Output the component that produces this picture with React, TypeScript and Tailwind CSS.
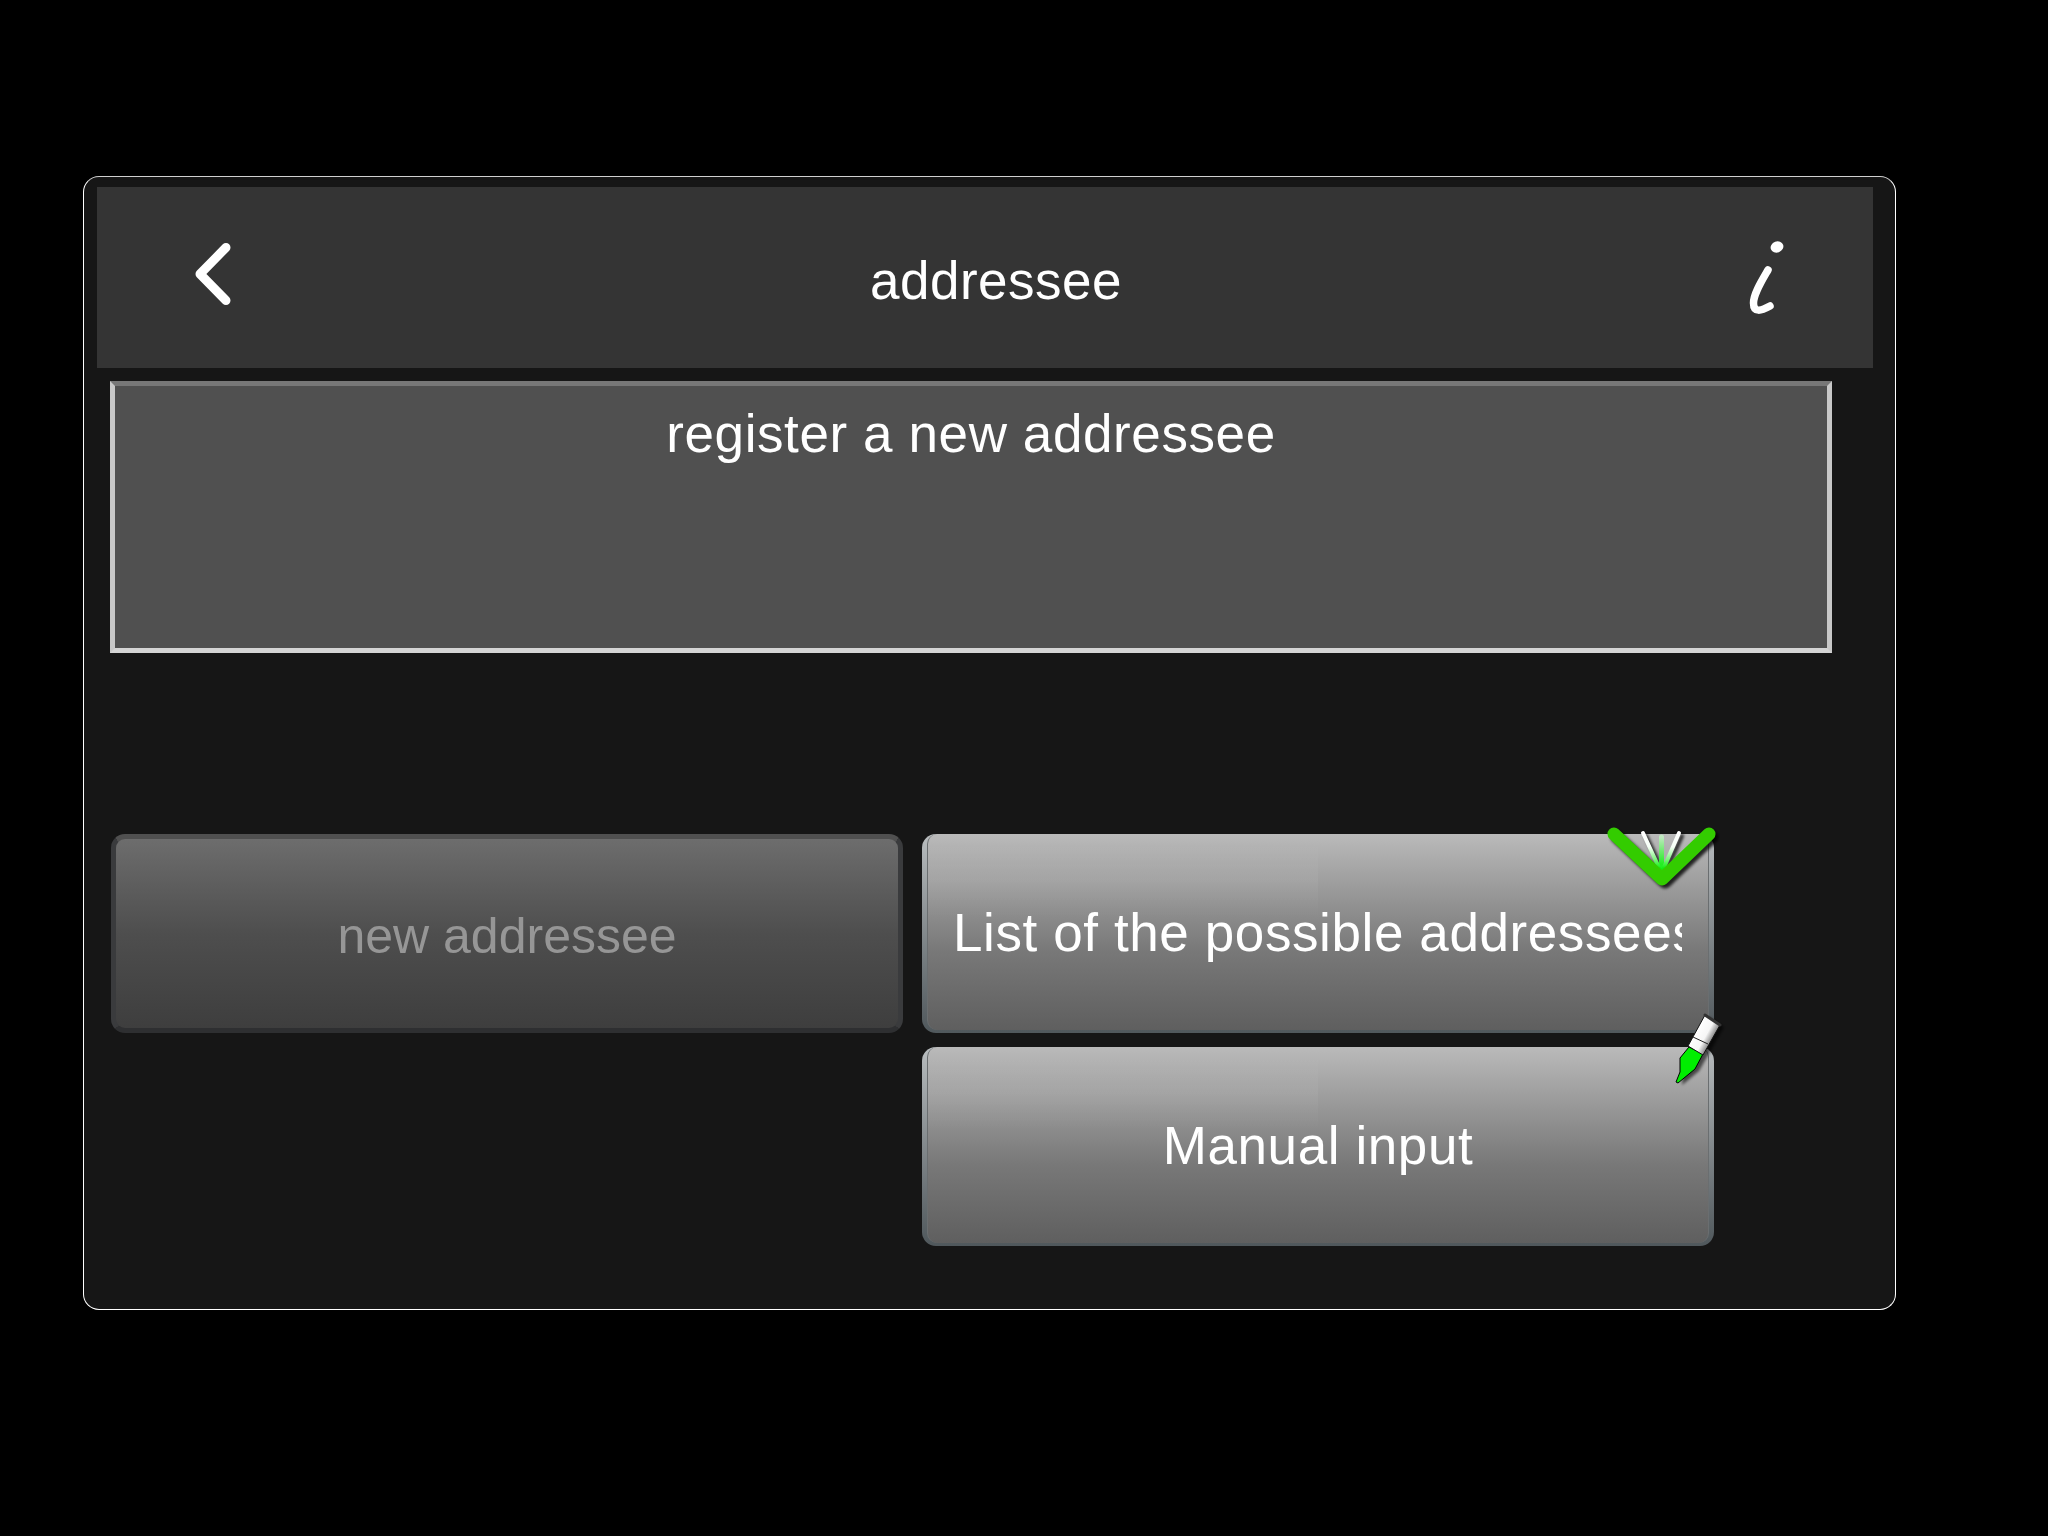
import type { ReactNode } from "react";

const sans = { fontFamily: '"Liberation Sans", Arial, sans-serif' };

function CheckBadge() {
  return (
    <svg className="absolute left-[682px] top-[-8px]" width="116" height="72" viewBox="0 0 116 72" fill="none">
      <defs>
        <linearGradient id="ray" gradientUnits="userSpaceOnUse" x1="0" y1="7" x2="0" y2="42">
          <stop offset="0" stopColor="#fff" />
          <stop offset="0.4" stopColor="#f6fff6" />
          <stop offset="0.75" stopColor="#80f580" />
          <stop offset="1" stopColor="#11ee11" />
        </linearGradient>
        <linearGradient id="midRay" gradientUnits="userSpaceOnUse" x1="0" y1="11" x2="0" y2="38">
          <stop offset="0" stopColor="#c0e8c0" />
          <stop offset="1" stopColor="#22ee22" />
        </linearGradient>
        <filter id="soft" x="-20%" y="-20%" width="140%" height="140%">
          <feGaussianBlur stdDeviation="1.6" />
        </filter>
      </defs>
      <g filter="url(#soft)" transform="translate(3 3)" stroke="#000" strokeOpacity="0.8" strokeLinecap="round">
        <path d="M39 7 L57 44 M75 7 L58 44" strokeWidth="4" />
        <path d="M10 8 L58 53 L105 8" strokeWidth="13" strokeLinejoin="round" />
      </g>
      <path d="M57.5 11 L57.5 46" stroke="url(#midRay)" strokeWidth="5" strokeLinecap="round" />
      <path d="M39 7 L57 46 M75 7 L58 46" stroke="url(#ray)" strokeWidth="4" strokeLinecap="round" />
      <path d="M10 8 L58 53 L105 8" stroke="#33cc00" strokeWidth="13" strokeLinecap="round" strokeLinejoin="round" />
    </svg>
  );
}

function PenBadge() {
  return (
    <svg className="absolute left-[748px] top-[-37px]" width="62" height="80" viewBox="0 0 62 80" fill="none">
      <defs>
        <linearGradient id="cap" gradientUnits="userSpaceOnUse" x1="26" y1="20" x2="44" y2="30">
          <stop offset="0" stopColor="#fff" />
          <stop offset="0.55" stopColor="#f6f6f6" />
          <stop offset="1" stopColor="#666" />
        </linearGradient>
        <filter id="penShadow" x="-30%" y="-30%" width="160%" height="160%">
          <feGaussianBlur stdDeviation="1.8" />
        </filter>
      </defs>
      <path d="M8 73 L25 59 L33 45 L50 15 L35 5 L10 48 Z" fill="#000" fillOpacity="0.6" filter="url(#penShadow)" transform="translate(4 2)" />
      <path d="M19 37 L33 44 L25 59 L8 73 L6 72 L10 62 L10 48 Z" fill="#00ee00" stroke="#000" strokeWidth="1" strokeLinejoin="round" />
      <path d="M35 5 L50 15 L33 45 L18 36 Z" fill="url(#cap)" stroke="#111" strokeWidth="1" strokeLinejoin="round" />
      <path d="M23 27 L38 34" stroke="#222" strokeWidth="1" />
      <path d="M35 5 L50 15" stroke="#333" strokeWidth="3" strokeLinecap="round" />
    </svg>
  );
}

function GlossButton({ children, center }: { children: ReactNode; center?: boolean }) {
  return (
    <button className="h-[199px] w-[792px] rounded-[14px] bg-gradient-to-b from-[#b9bdbf] to-[#50585c] px-[5px] pb-[3px]">
      <span className={`relative flex h-full items-center overflow-hidden rounded-[10px] border-x border-x-[#6a6e70] bg-gradient-to-b from-[#bababa] via-[#787878] via-60% to-[#5f5f5f] pt-[2px] text-[53px] tracking-[0.6px] ${center ? "justify-center" : "pl-[25px]"}`}>
        <span className="absolute left-0 top-[8px] h-[76px] w-1/2 bg-gradient-to-b from-white/0 via-white/5 to-white/0" />
        {children}
      </span>
    </button>
  );
}

export default function App() {
  return (
    <div className="h-[1536px] w-[2048px] overflow-hidden bg-black pl-[83px] pt-[176px] text-white" style={sans}>
      <div className="h-[1134px] w-[1813px] rounded-[16px] border border-white border-t-[#d0d0d0] bg-[#161616] pl-[13px] pt-[10px]">
        <header className="flex h-[181px] w-[1776px] items-center justify-between bg-[#343434]">
          <svg className="ml-[98px] mt-[-8px]" width="38" height="64" viewBox="0 0 38 64" fill="none">
            <path d="M31 5.5 L5 32 L31 58.5" stroke="#fff" strokeWidth="9" strokeLinecap="round" strokeLinejoin="round" />
          </svg>
          <h1 className="ml-[10px] mt-[7px] text-[53px] tracking-[0.5px]">addressee</h1>
          <svg className="mr-[89px]" width="35" height="76" viewBox="0 0 35 76" fill="none">
            <ellipse cx="28" cy="7" rx="6.5" ry="5.5" fill="#fff" transform="rotate(-20 28 7)" />
            <path d="M19 30 C12 42 4.5 54 4.5 63 C4.5 73 12 71 21 66" stroke="#fff" strokeWidth="7.5" strokeLinecap="round" />
          </svg>
        </header>

        <div className="ml-[13px] mt-[13px] h-[272px] w-[1722px] border-[5px] border-x-[#c8c8c8] border-b-[#d4d4d4] border-t-[#777777] bg-[#505050] pt-[17px] text-center text-[53px] leading-[61px] tracking-[0.6px]">
          register a new addressee
        </div>

        <div className="ml-[14px] mt-[181px] flex gap-[19px]">
          <button className="flex h-[199px] w-[792px] items-center justify-center rounded-[14px] border-[5px] border-x-[#3a3b3d] border-b-[#2e2f31] border-t-[#505050] bg-gradient-to-b from-[#6d6d6d] via-[#4e4e4e] to-[#3e3e3e] pt-[5px] text-[50px] text-[#969696]">
            new addressee
          </button>

          <div className="flex w-[792px] flex-col gap-[14px]">
            <div className="relative">
              <GlossButton>
                <span className="relative w-[729px] overflow-hidden whitespace-nowrap text-left">List of the possible addressees</span>
              </GlossButton>
              <CheckBadge />
            </div>
            <div className="relative">
              <GlossButton center>
                <span className="relative">Manual input</span>
              </GlossButton>
              <PenBadge />
            </div>
          </div>
        </div>
      </div>
    </div>
  );
}
